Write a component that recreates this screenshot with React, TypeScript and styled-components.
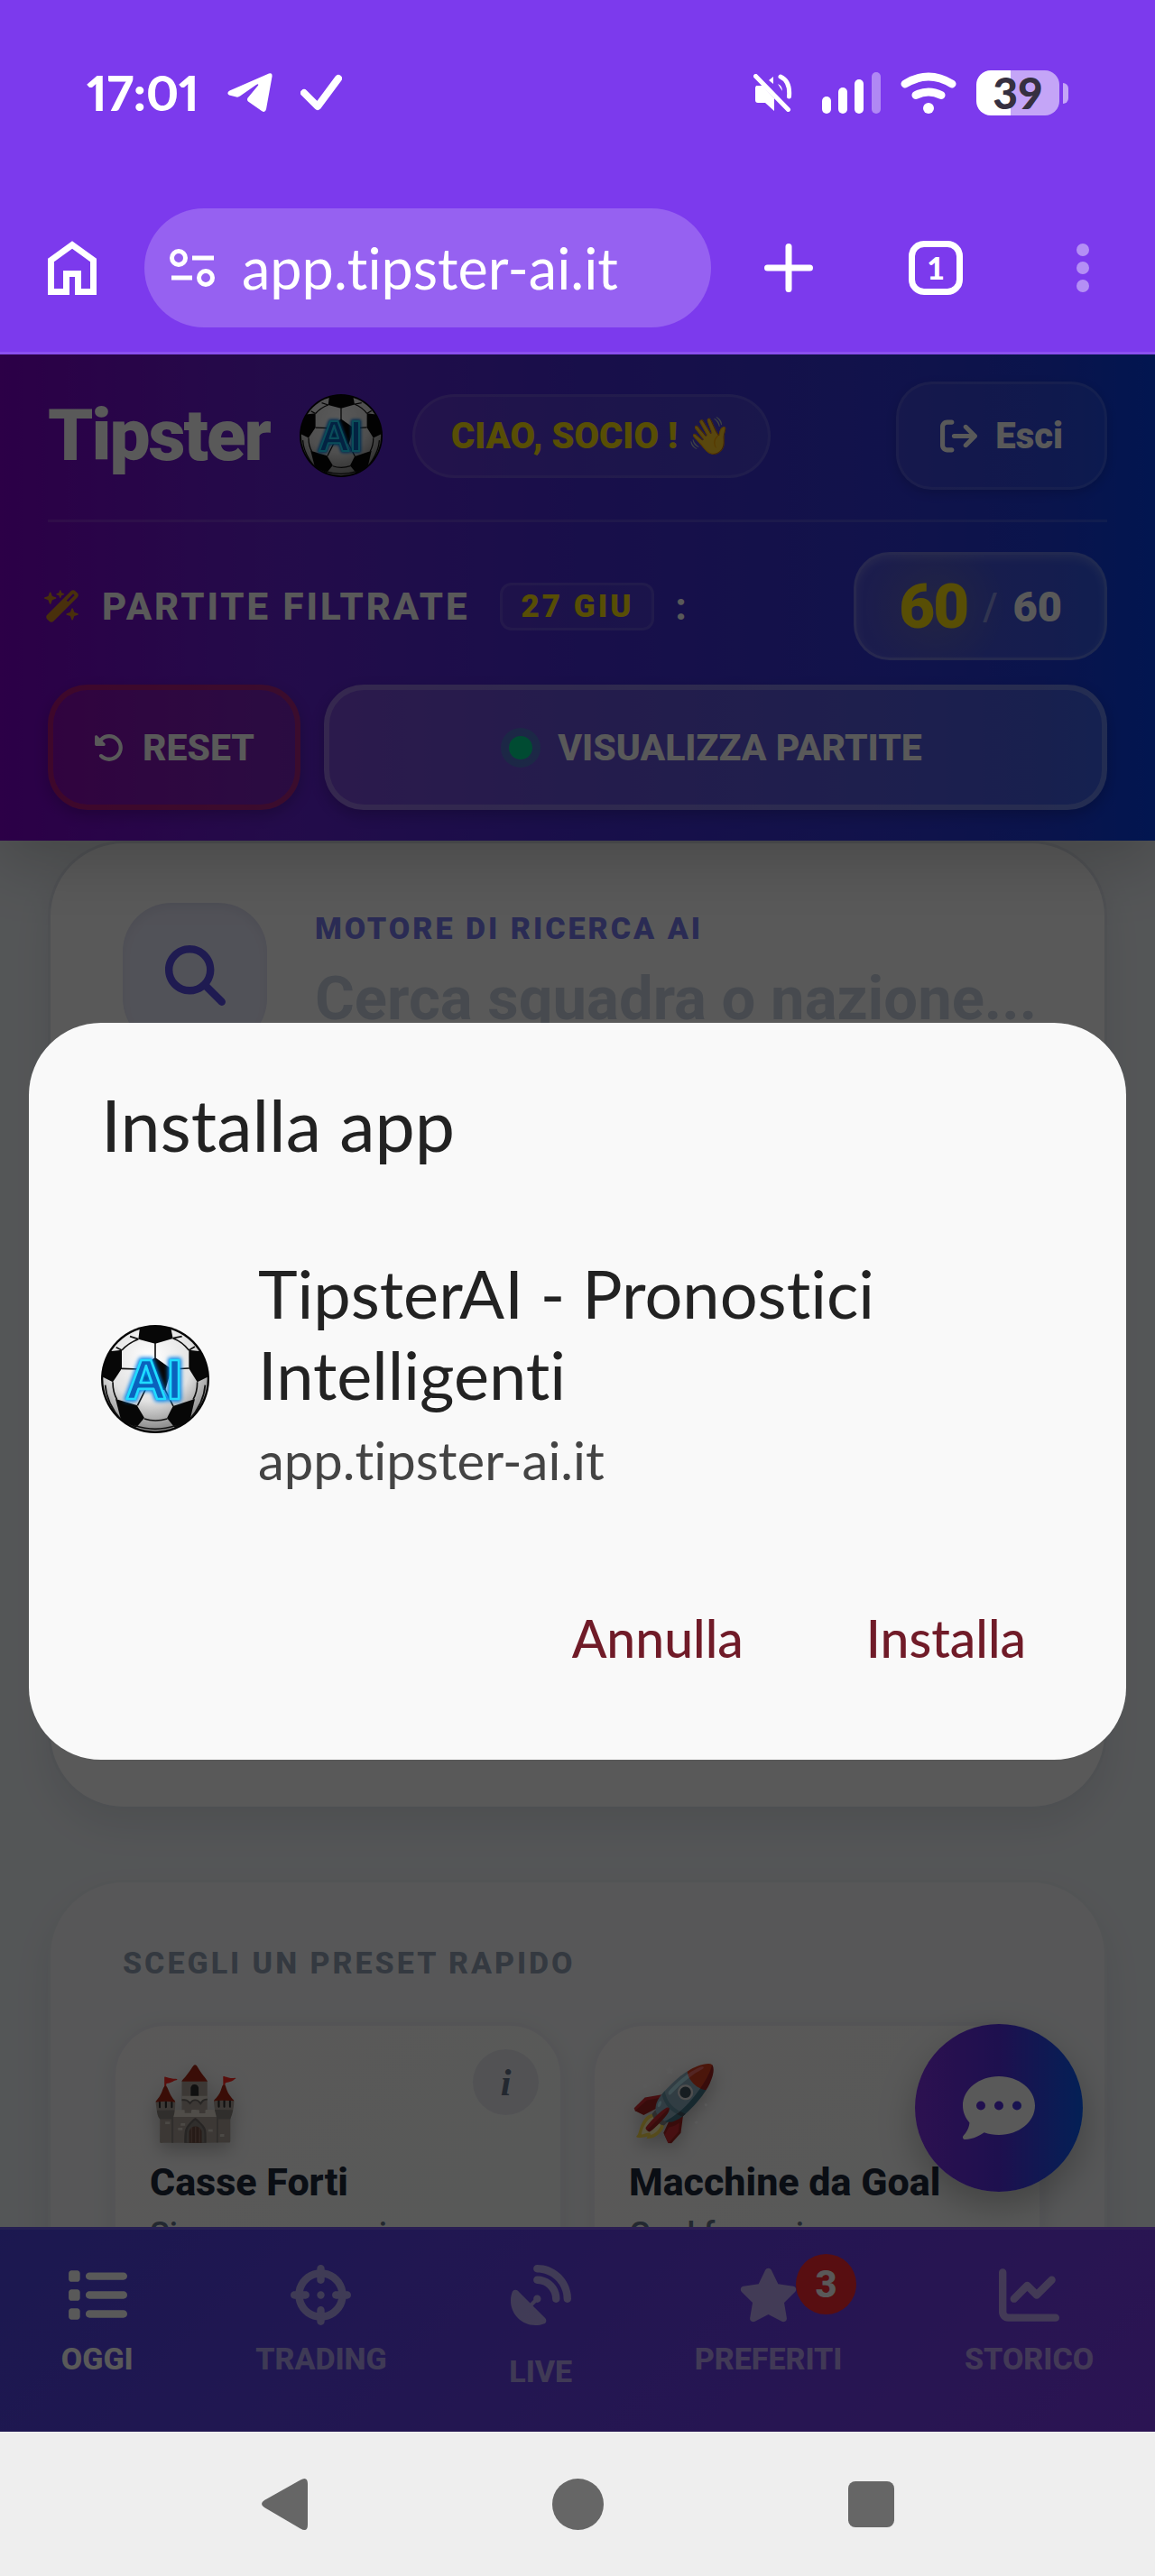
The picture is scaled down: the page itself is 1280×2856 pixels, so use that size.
import styled, { createGlobalStyle } from "styled-components";
import {
  FaArrowRightFromBracket,
  FaChartLine,
  FaCommentDots,
  FaCrosshairs,
  FaList,
  FaMagnifyingGlass,
  FaRotateLeft,
  FaSatelliteDish,
  FaStar,
  FaWandMagicSparkles,
} from "react-icons/fa6";

const GlobalStyle = createGlobalStyle`
  * {
    box-sizing: border-box;
  }

  body {
    margin: 0;
    font-family: Roboto, "Liberation Sans", sans-serif;
  }

  button,
  input {
    margin: 0;
    padding: 0;
    border: none;
    background: none;
    font: inherit;
    color: inherit;
  }

  button {
    cursor: pointer;
  }

  a {
    color: inherit;
    text-decoration: none;
  }

  svg {
    display: block;
    flex-shrink: 0;
  }
`;

const Screen = styled.div`
  display: flex;
  flex-direction: column;
  height: 100vh;
  overflow: hidden;
`;

/* phone status bar and browser bar */

const StatusBar = styled.div`
  display: flex;
  align-items: center;
  justify-content: space-between;
  height: 200px;
  padding: 6px 96px 0;
  background-color: #7c3aed;
  color: white;
  font-family: Lato, sans-serif;
`;

const StatusGroup = styled.div<{ $gap: number }>`
  display: flex;
  align-items: center;
  gap: ${(props) => props.$gap}px;
`;

const Clock = styled.span`
  font-size: 54px;
  font-weight: 900;
  font-variant-numeric: proportional-nums;
  line-height: 64px;
`;

const Battery = styled.div`
  display: flex;
  align-items: center;
  gap: 4px;

  &::after {
    content: "";
    width: 6px;
    height: 23px;
    border-radius: 0 6px 6px 0;
    background-color: #c4a5f7;
  }
`;

const BatteryLevel = styled.span`
  width: 92px;
  height: 50px;
  border-radius: 16px;
  background: linear-gradient(to right, white 41%, #c4a5f7 41%);
  color: #363040;
  font-size: 48px;
  font-weight: 900;
  line-height: 50px;
  text-align: center;
`;

const BrowserBar = styled.div`
  display: flex;
  align-items: center;
  height: 193px;
  padding-top: 3px;
  border-bottom: 3px solid #8b50ef;
  background-color: #7c3aed;
  color: white;
  font-family: Lato, sans-serif;
`;

const HomeBtn = styled.button`
  display: flex;
  justify-content: center;
  width: 160px;
`;

const AddressPill = styled.div`
  display: flex;
  align-items: center;
  gap: 30px;
  flex: 1;
  min-width: 0;
  height: 132px;
  margin-right: 6px;
  padding: 0 28px;
  border-radius: 66px;
  background-color: #9661f1;
`;

const AddressInput = styled.input`
  flex: 1;
  min-width: 0;
  font-size: 63px;
  font-variant-ligatures: none;
  line-height: 76px;
  outline: none;
`;

const BrowserActions = styled.div`
  display: flex;
  gap: 3px;
`;

const BrowserBtn = styled.button`
  display: flex;
  align-items: center;
  justify-content: center;
  width: 160px;
  height: 132px;
`;

const TabCount = styled.span`
  width: 60px;
  height: 60px;
  border: 7px solid white;
  border-radius: 17px;
  font-size: 34px;
  font-weight: 900;
  line-height: 46px;
  text-align: center;
`;

/* web app */

const WebView = styled.div`
  position: relative;
  display: flex;
  flex-direction: column;
  flex: 1;
  min-height: 0;
  overflow: hidden;
  background-color: #f1f5f9;
`;

const Header = styled.header`
  position: relative;
  z-index: 1;
  padding: 30px 53px 34px;
  background: linear-gradient(
    to right,
    #7e00ca 0%,
    #6622d3 24%,
    #472bd3 50%,
    #3336d6 75%,
    #1f39d9 90%,
    #063fe5 100%
  );
  box-shadow: 0 20px 70px rgba(0, 0, 0, 0.2);
  color: white;
`;

const HeaderRow = styled.div`
  display: flex;
  align-items: center;
  justify-content: space-between;
`;

const TopRow = styled(HeaderRow)`
  padding-bottom: 33px;
  border-bottom: 3px solid rgba(255, 255, 255, 0.12);
  margin-bottom: 33px;
`;

const Brand = styled.div`
  display: flex;
  align-items: center;
  gap: 33px;
`;

const BrandName = styled.h1`
  margin: 0;
  font-size: 80px;
  font-weight: 900;
  line-height: 92px;
  letter-spacing: -2px;
`;

const Greeting = styled.span`
  padding: 20px 40px;
  border: 3px solid rgba(255, 255, 255, 0.1);
  border-radius: 47px;
  background-color: rgba(255, 255, 255, 0.08);
  color: #fde011;
  font-size: 40px;
  font-weight: 900;
  line-height: 47px;
`;

const LogoutBtn = styled.button`
  display: flex;
  align-items: center;
  gap: 20px;
  height: 120px;
  padding: 0 46px;
  border: 3px solid rgba(255, 255, 255, 0.1);
  border-radius: 40px;
  background-color: rgba(255, 255, 255, 0.08);
  box-shadow: 0 4px 12px rgba(0, 0, 0, 0.15);
  font-size: 40px;
  font-weight: 900;
`;

const FilterLabel = styled.div`
  display: flex;
  align-items: center;
  gap: 24px;
  font-size: 42px;
  font-weight: 800;
  letter-spacing: 3px;

  svg {
    width: auto;
    height: 40px;
    margin-left: -4px;
    color: #d08a24;
  }
`;

const DateBadge = styled.span`
  margin-left: 9px;
  padding: 0 19px 0 21px;
  border: 3px solid rgba(255, 255, 255, 0.1);
  border-radius: 13px;
  background-color: rgba(255, 255, 255, 0.06);
  color: #fde011;
  font-size: 35px;
  font-weight: 900;
  line-height: 47px;
`;

const Counter = styled.div`
  display: flex;
  align-items: center;
  gap: 17px;
  height: 120px;
  padding: 0 47px;
  border: 3px solid rgba(255, 255, 255, 0.2);
  border-radius: 40px;
  background:
    radial-gradient(circle at 32% 50%, rgba(253, 224, 17, 0.14), transparent 40%),
    rgba(255, 255, 255, 0.14);
  box-shadow: inset 0 4px 8px rgba(255, 255, 255, 0.18);
  font-size: 47px;
  font-weight: 900;
`;

const CounterCurrent = styled.span`
  color: #fde011;
  font-size: 69px;
  letter-spacing: -2px;
`;

const CounterSlash = styled.span`
  color: rgba(255, 255, 255, 0.4);
  font-size: 42px;
  font-weight: 500;
`;

const ActionRow = styled.div`
  display: flex;
  gap: 26px;
  margin-top: 27px;
`;

const ActionBtn = styled.button<{ $danger?: boolean }>`
  display: flex;
  align-items: center;
  justify-content: center;
  gap: ${(props) => (props.$danger ? 20 : 28)}px;
  flex: ${(props) => (props.$danger ? "0 0 280px" : "1")};
  height: 139px;
  border: 6px solid
    ${(props) =>
      props.$danger ? "rgba(239, 40, 40, 0.4)" : "rgba(255, 255, 255, 0.22)"};
  border-radius: 44px;
  background-color: ${(props) =>
    props.$danger ? "rgba(239, 40, 60, 0.16)" : "rgba(255, 255, 255, 0.18)"};
  box-shadow: 0 6px 16px rgba(0, 0, 0, 0.2);
  font-size: 41px;
  font-weight: 800;
`;

const LiveDot = styled.span`
  width: 26px;
  height: 26px;
  border-radius: 50%;
  background-color: #00d68f;
  box-shadow: 0 0 0 9px rgba(0, 214, 143, 0.25);
`;

const Main = styled.main`
  display: flex;
  flex-direction: column;
  flex: 1 1 0;
  min-height: 0;
  gap: 78px;
  padding: 0 53px;
  overflow: hidden;
`;

const Card = styled.section<{ $tinted?: boolean }>`
  flex-shrink: 0;
  border: 3px solid ${(props) => (props.$tinted ? "#eceff3" : "#e0e4ec")};
  border-radius: 84px;
  background-color: ${(props) => (props.$tinted ? "#f8fafc" : "#ffffff")};
  box-shadow: 0 20px 40px rgba(15, 23, 42, 0.08);
`;

const SearchCard = styled(Card)`
  min-height: 1074px;
  padding: 66px 60px 66px 80px;
`;

const SearchRow = styled.div`
  display: flex;
  gap: 53px;
`;

const SearchTile = styled.div`
  display: flex;
  align-items: center;
  justify-content: center;
  width: 160px;
  height: 160px;
  border-radius: 54px;
  background-color: #e9eafb;
  box-shadow: inset 0 6px 12px rgba(15, 23, 42, 0.05);
  color: #5b4fe8;
`;

const SearchField = styled.label`
  display: flex;
  flex-direction: column;
  flex: 1;
  min-width: 0;
  padding-top: 8px;
  color: #7a7df0;
  font-size: 34px;
  font-weight: 900;
  line-height: 40px;
  letter-spacing: 3px;
`;

const SearchInput = styled.input`
  margin-top: 18px;
  color: #1e293b;
  font-size: 67px;
  font-weight: 700;
  line-height: 80px;
  letter-spacing: normal;
  outline: none;

  &::placeholder {
    color: #cbd5e1;
    opacity: 1;
  }
`;

const PresetCard = styled(Card)`
  min-height: 800px;
  padding: 69px 68px;
`;

const PresetHeading = styled.h2`
  margin: 0 0 46px 12px;
  color: #94a3b8;
  font-size: 34px;
  font-weight: 800;
  line-height: 40px;
  letter-spacing: 3px;
`;

const PresetGrid = styled.div`
  display: grid;
  grid-template-columns: 1fr 1fr;
  gap: 30px;
`;

const Preset = styled.article`
  position: relative;
  min-height: 400px;
  padding: 32px 38px;
  border: 4px solid #eff0f6;
  border-radius: 60px;
  background: linear-gradient(135deg, #fffdfd, #fcfffd);
  box-shadow: 0 6px 24px rgba(15, 23, 42, 0.08);
`;

const PresetEmoji = styled.div`
  font-size: 80px;
  line-height: 108px;
  filter: drop-shadow(0 8px 10px rgba(0, 0, 0, 0.25));
`;

const PresetTitle = styled.h3`
  margin: 8px 0 8px;
  color: #1e293b;
  font-size: 43px;
  font-weight: 800;
  line-height: 50px;
  white-space: nowrap;
`;

const PresetText = styled.p`
  margin: 0;
  color: #64748b;
  font-size: 36px;
  font-weight: 500;
  line-height: 50px;
`;

const InfoBtn = styled.button`
  position: absolute;
  top: 26px;
  right: 24px;
  width: 73px;
  height: 73px;
  border-radius: 50%;
  background-color: #eaecf1;
  color: #64748b;
  font-family: "Liberation Serif", serif;
  font-size: 42px;
  font-style: italic;
  font-weight: 700;
`;

const ChatBtn = styled.button`
  position: absolute;
  right: 80px;
  bottom: 266px;
  display: flex;
  align-items: center;
  justify-content: center;
  width: 186px;
  height: 186px;
  border-radius: 50%;
  background: linear-gradient(to right, #8031e5, #562fe0 50%, #0b5cf5);
  box-shadow: 0 16px 40px rgba(0, 0, 0, 0.25);
  color: white;
`;

const BottomNav = styled.nav`
  position: relative;
  display: flex;
  justify-content: space-around;
  height: 227px;
  padding-top: 39px;
  border-top: 3px solid rgba(255, 255, 255, 0.12);
  background: linear-gradient(135deg, #4f46e5, #7c3aed);
`;

const NavItem = styled.a<{ $active?: boolean; $gap?: number }>`
  display: flex;
  flex-direction: column;
  align-items: center;
  gap: ${(props) => props.$gap || 17}px;
  color: ${(props) => (props.$active ? "white" : "rgba(255, 255, 255, 0.55)")};
  font-size: 34px;
  font-weight: 800;
  line-height: 40px;
`;

const NavIcon = styled.div`
  position: relative;

  svg {
    width: auto;
    height: 67px;
  }
`;

const NavBadge = styled.span`
  position: absolute;
  top: -12px;
  left: 64px;
  width: 67px;
  height: 67px;
  border-radius: 50%;
  background-color: #fb2833;
  color: white;
  font-size: 42px;
  line-height: 67px;
  text-align: center;
`;

/* install dialog */

const Scrim = styled.div`
  position: absolute;
  inset: 0;
  z-index: 2;
  display: flex;
  align-items: center;
  justify-content: center;
  padding: 0 32px 4px;
  background-color: rgba(0, 0, 0, 0.65);
`;

const Dialog = styled.div`
  width: 100%;
  padding: 65px 43px 80px 80px;
  border-radius: 80px;
  background-color: #f9f9f9;
  color: #222222;
  font-family: Lato, sans-serif;
  font-variant-ligatures: none;
`;

const DialogTitle = styled.h2`
  margin: 0 0 94px;
  font-size: 79px;
  font-weight: 400;
  line-height: 96px;
`;

const DialogBody = styled.div`
  display: flex;
  align-items: center;
  gap: 54px;
`;

const AppName = styled.p`
  margin: 0;
  font-size: 74px;
  line-height: 90px;
`;

const AppUrl = styled.p`
  margin: 0;
  color: #444444;
  font-size: 58px;
  line-height: 100px;
`;

const DialogActions = styled.div`
  display: flex;
  justify-content: flex-end;
  margin-top: 92px;
`;

const DialogBtn = styled.button`
  height: 110px;
  padding: 0 68px;
  color: #701b28;
  font-size: 57px;
  font-weight: 500;
`;

const SystemNav = styled.div`
  display: flex;
  align-items: center;
  justify-content: center;
  gap: 268px;
  height: 160px;
  background-color: #eeeeee;

  button {
    color: #666666;
  }
`;

const Ball = ({ size }: { size: number }) => (
  <svg width={size} height={size} viewBox="0 0 360 360">
    <defs>
      <radialGradient id="leather" cx="0.45" cy="0.3" r="0.75">
        <stop offset="0" stopColor="#ffffff" />
        <stop offset="0.55" stopColor="#e2e2e2" />
        <stop offset="1" stopColor="#777777" />
      </radialGradient>
      <filter id="glow" x="-30%" y="-30%" width="160%" height="160%">
        <feGaussianBlur stdDeviation="6" />
      </filter>
      <clipPath id="round">
        <circle cx="180" cy="180" r="176" />
      </clipPath>
    </defs>
    <circle cx="180" cy="180" r="180" fill="#050505" />
    <circle cx="180" cy="180" r="173" fill="url(#leather)" />
    <g clipPath="url(#round)">
      <g fill="#070707">
        <path d="M130 0h100l9 45-59 17-56-15z" />
        <path d="M0 110l28-22 41-5v62l-30 45-39-20z" />
        <path d="M360 110l-28-22-40-5v62l28 45 40-20z" />
        <path d="M48 246l71 21 25 42-27 32-50-22z" />
        <path d="M312 246l-73 24-20 40 26 31 50-22z" />
        <path d="M180 108l54 38-20 70h-68l-20-70z" />
      </g>
      <g fill="none" stroke="#111111" strokeWidth="5">
        <path d="M180 60v50M69 145l59 2M292 144l-60 3M148 214l-27 54M212 214l28 56" />
        <path d="M124 47Q90 60 69 84M239 44q32 12 53 40M39 190q0 34 14 58M320 190q0 34-14 58" />
        <path d="M144 312q36 12 76 0M124 47L96 38M239 44l30-6M69 84L50 74M292 84l20-12" />
        <path d="M14 200q4 60 54 118M346 200q-4 60-54 118M110 334q70 24 140 0" />
      </g>
    </g>
    <g
      fontFamily="Liberation Sans, sans-serif"
      fontWeight="700"
      fontSize="190"
      textAnchor="middle"
      strokeLinejoin="round"
    >
      <text x="176" y="246" fill="#0070d0" stroke="#0080e8" strokeWidth="18" filter="url(#glow)" aria-hidden="true">
        AI
      </text>
      <text x="176" y="246" fill="#0a62bd" stroke="#1fdcff" strokeWidth="8">
        AI
      </text>
    </g>
  </svg>
);

const navItems = [
  { name: "OGGI", icon: FaList, active: true },
  { name: "TRADING", icon: FaCrosshairs },
  { name: "LIVE", icon: FaSatelliteDish, gap: 31 },
  { name: "PREFERITI", icon: FaStar, badge: 3 },
  { name: "STORICO", icon: FaChartLine },
];

const presets = [
  { emoji: "🏰", title: "Casse Forti", text: "Sicurezza massima" },
  { emoji: "🚀", title: "Macchine da Goal", text: "Goal frenesia" },
];

const PhoneStatus = () => (
  <StatusBar>
    <StatusGroup $gap={31}>
      <Clock>17:01</Clock>
      <svg width="50" height="44" viewBox="0 0 50 44" fill="white">
        <path d="M46 .5L2.500 19.500Q-1.500 22 2 24.500l8 2Q12 27 14 25.500L32 13q3-2 2 .8L23 27q-2 2 0 4.500L38 42q4 2.500 5-2L49.500 4Q50-1 46 .5z" />
      </svg>
      <svg width="46" height="42" viewBox="0 0 46 42" fill="none" stroke="white" strokeWidth="8" strokeLinecap="round" strokeLinejoin="round">
        <path d="M4 21l15 15L42 5" />
      </svg>
    </StatusGroup>
    <StatusGroup $gap={22}>
      <svg width="54" height="42" viewBox="0 0 54 42">
        <path d="M3 13h7l13 14v14L13 32H5q-3 0-3-3V15z" fill="white" />
        <path d="M17 7l5-4v8zM27 11q5 2 5 8z" fill="white" />
        <path d="M30 3q11 5 9.500 22" fill="none" stroke="white" strokeWidth="5" strokeLinecap="round" />
        <path d="M5 2l36 36" stroke="#7c3aed" strokeWidth="6" />
        <path d="M2.500 2.500l36 37" stroke="white" strokeWidth="5" strokeLinecap="round" />
      </svg>
      <svg width="65" height="46" viewBox="0 0 65 46" fill="white">
        <rect y="27" width="10" height="19" rx="5" />
        <rect x="18" y="17" width="10" height="29" rx="5" />
        <rect x="36" y="8" width="10" height="38" rx="5" />
        <rect x="55" width="10" height="46" rx="5" opacity="0.4" />
      </svg>
      <svg width="62" height="46" viewBox="0 0 62 46" fill="none" stroke="white" strokeWidth="9" strokeLinecap="round">
        <path d="M5 13q26-16 52 0M17 25.500q14-7 28 0" />
        <circle cx="31" cy="40" r="6" fill="white" stroke="none" />
      </svg>
      <Battery>
        <BatteryLevel>39</BatteryLevel>
      </Battery>
    </StatusGroup>
  </StatusBar>
);

const Browser = () => (
  <BrowserBar>
    <HomeBtn aria-label="Home">
      <svg width="54" height="60" viewBox="0 0 54 60" fill="none" stroke="white" strokeWidth="7">
        <path d="M3.500 21.500L27 4.500l23.500 17v35h-17V36.500h-13v20h-17z" />
      </svg>
    </HomeBtn>
    <AddressPill>
      <svg width="50" height="42" viewBox="0 0 50 42" fill="none" stroke="white" strokeWidth="5">
        <circle cx="10" cy="10" r="7.500" />
        <circle cx="40" cy="32" r="7.500" />
        <path d="M25 10h24M2 32h23" />
      </svg>
      <AddressInput aria-label="URL" defaultValue="app.tipster-ai.it" />
    </AddressPill>
    <BrowserActions>
      <BrowserBtn aria-label="+">
        <svg width="54" height="54" viewBox="0 0 54 54" stroke="white" strokeWidth="7" strokeLinecap="round">
          <path d="M27 3.500v47M3.500 27h47" />
        </svg>
      </BrowserBtn>
      <BrowserBtn>
        <TabCount>1</TabCount>
      </BrowserBtn>
      <BrowserBtn aria-label="Menu">
        <svg width="14" height="54" viewBox="0 0 14 54" fill="#b48ff5">
          <circle cx="7" cy="7" r="7" />
          <circle cx="7" cy="27" r="7" />
          <circle cx="7" cy="47" r="7" />
        </svg>
      </BrowserBtn>
    </BrowserActions>
  </BrowserBar>
);

const AppHeader = () => (
  <Header>
    <TopRow>
      <Brand>
        <BrandName>Tipster</BrandName>
        <Ball size={92} />
        <Greeting>CIAO, SOCIO ! 👋</Greeting>
      </Brand>
      <LogoutBtn>
        <FaArrowRightFromBracket size={41} />
        Esci
      </LogoutBtn>
    </TopRow>
    <HeaderRow>
      <FilterLabel>
        <FaWandMagicSparkles />
        PARTITE FILTRATE
        <DateBadge>27 GIU</DateBadge>:
      </FilterLabel>
      <Counter>
        <CounterCurrent>60</CounterCurrent>
        <CounterSlash>/</CounterSlash>
        <span>60</span>
      </Counter>
    </HeaderRow>
    <ActionRow>
      <ActionBtn $danger>
        <FaRotateLeft size={34} />
        RESET
      </ActionBtn>
      <ActionBtn>
        <LiveDot />
        VISUALIZZA PARTITE
      </ActionBtn>
    </ActionRow>
  </Header>
);

const InstallDialog = () => (
  <Scrim>
    <Dialog role="dialog" aria-labelledby="install-title">
      <DialogTitle id="install-title">Installa app</DialogTitle>
      <DialogBody>
        <Ball size={120} />
        <div>
          <AppName>
            TipsterAI - Pronostici
            <br />
            Intelligenti
          </AppName>
          <AppUrl>app.tipster-ai.it</AppUrl>
        </div>
      </DialogBody>
      <DialogActions>
        <DialogBtn>Annulla</DialogBtn>
        <DialogBtn>Installa</DialogBtn>
      </DialogActions>
    </Dialog>
  </Scrim>
);

const App = () => {
  return (
    <Screen>
      <GlobalStyle />
      <PhoneStatus />
      <Browser />
      <WebView>
        <AppHeader />
        <Main>
          <SearchCard>
            <SearchRow>
              <SearchTile>
                <FaMagnifyingGlass size={67} />
              </SearchTile>
              <SearchField>
                MOTORE DI RICERCA AI
                <SearchInput placeholder="Cerca squadra o nazione..." />
              </SearchField>
            </SearchRow>
          </SearchCard>
          <PresetCard $tinted>
            <PresetHeading>SCEGLI UN PRESET RAPIDO</PresetHeading>
            <PresetGrid>
              {presets.map((preset) => (
                <Preset key={preset.title}>
                  <PresetEmoji>{preset.emoji}</PresetEmoji>
                  <InfoBtn>i</InfoBtn>
                  <PresetTitle>{preset.title}</PresetTitle>
                  <PresetText>{preset.text}</PresetText>
                </Preset>
              ))}
            </PresetGrid>
          </PresetCard>
        </Main>
        <ChatBtn aria-label="Chat">
          <FaCommentDots size={80} />
        </ChatBtn>
        <BottomNav>
          {navItems.map(({ name, icon: Icon, active, gap, badge }) => (
            <NavItem key={name} href="#" $active={active} $gap={gap}>
              <NavIcon>
                <Icon />
                {badge && <NavBadge>{badge}</NavBadge>}
              </NavIcon>
              {name}
            </NavItem>
          ))}
        </BottomNav>
        <InstallDialog />
      </WebView>
      <SystemNav>
        <button aria-label="Indietro">
          <svg width="57" height="57" viewBox="0 0 57 57" fill="currentColor">
            <path d="M46 1.500Q54-3 54 6v45q0 9-8 4.500L6 32q-6-4 0-8z" />
          </svg>
        </button>
        <button aria-label="Home">
          <svg width="57" height="57" viewBox="0 0 57 57" fill="currentColor">
            <circle cx="28.500" cy="28.500" r="28.500" />
          </svg>
        </button>
        <button aria-label="App recenti">
          <svg width="57" height="57" viewBox="0 0 57 57" fill="currentColor">
            <rect x="3" y="3" width="51" height="51" rx="8" />
          </svg>
        </button>
      </SystemNav>
    </Screen>
  );
};

export default App;
